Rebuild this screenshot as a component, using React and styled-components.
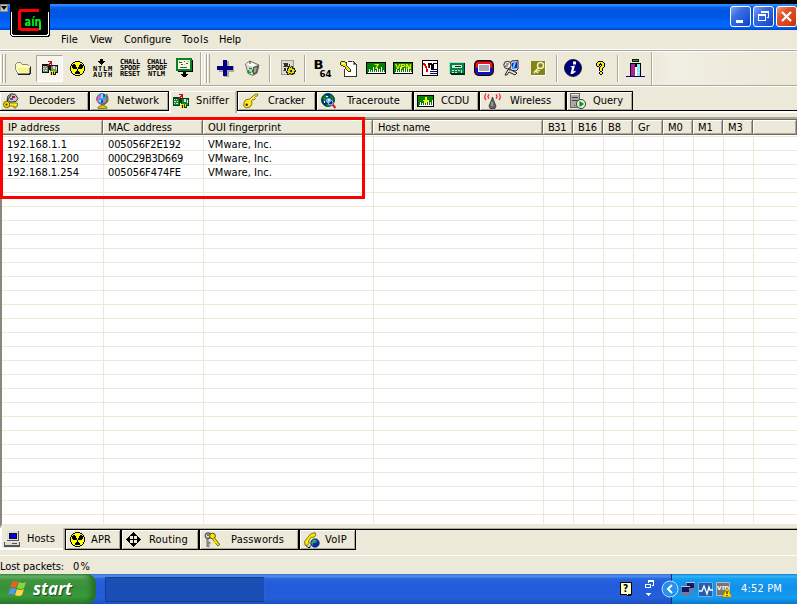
import React, { useLayoutEffect, useRef } from "react";
import styled, { createGlobalStyle } from "styled-components";

const Global = createGlobalStyle`
  *{box-sizing:border-box}
  html,body{margin:0;padding:0;overflow:hidden}
  body{font:11px/14px "DejaVu Sans Condensed","DejaVu Sans",sans-serif;font-stretch:condensed;color:#000}
  svg{display:block;flex:none;overflow:visible}
`;
const face = "#ece9d8";

/* Text set to a given advance width, as the bitmap UI font has fixed advances. */
const FitBox = styled.span`
  display:block;flex:none;white-space:pre;
  width:${p => p.$w}px;margin-left:${p => p.$ml || 0}px;
`;
function Fit({ w, ml, children }) {
  const ref = useRef(null);
  useLayoutEffect(() => {
    const el = ref.current;
    el.style.letterSpacing = "0px";
    const natural = el.getBoundingClientRect().width;
    el.style.letterSpacing = (w - natural) / children.length + "px";
  }, [w, children]);
  return <FitBox $w={w} $ml={ml}><span ref={ref}>{children}</span></FitBox>;
}

const Screen = styled.div`
  position:relative;width:797px;height:604px;overflow:hidden;background:${face};
  display:flex;flex-direction:column;
`;
const TitleBar = styled.header`
  height:30px;flex:none;display:flex;justify-content:flex-end;gap:2px;padding-top:2px;
  border-top:4px solid #000;
  background:linear-gradient(#2a80f5 0,#3590ff 1px,#0a63ee 3px,#0055e0 6px,#0058e8 13px,#0067ff 20px,#0066fb 23px,#0042cc 26px);
`;
const WinButton = styled.button`
  width:21px;height:21px;padding:0;border:1px solid #fff;border-radius:3px;
  display:grid;place-items:center;
  background:${p => p.$close
    ? "linear-gradient(135deg,#f0a080,#e0502c 35%,#d84418 70%,#b83008)"
    : "linear-gradient(135deg,#82a8f4,#3a6ee0 35%,#2258dc 70%,#1540b0)"};
`;
const CornerMark = styled.div`
  position:absolute;left:0;top:4px;width:8px;height:8px;background:#c8c8c8;border:1px solid #888;
  display:grid;place-items:center;
`;
const Logo = styled.div`position:absolute;left:10px;top:0;width:40px;height:37px;`;
const MenuBar = styled.nav`
  height:22px;flex:none;display:flex;padding-top:3px;
  border-bottom:1px solid #fff;box-shadow:inset 0 -1px #aca899,inset 0 -2px #fff;
`;
const Toolbar = styled.div`
  height:35px;flex:none;display:flex;align-items:center;padding-bottom:2px;
  border-bottom:1px solid #fff;box-shadow:inset 0 -1px #aca899;
  background:linear-gradient(90deg,#ece9d8 651px,#f1eee3 670px,#ece9d8);
`;
const Slot = styled.div`
  flex:none;width:${p => p.$w}px;margin-left:${p => p.$ml}px;height:24px;
  display:grid;place-items:center;
`;
const Pressed = styled(Slot)`
  height:27px;background:#f7f5ee;border:1px solid #aca899;border-right-color:#fff;border-bottom-color:#fff;
`;
const Grip = styled.i`
  flex:none;width:6px;height:29px;margin-left:${p => p.$ml}px;
  background:linear-gradient(90deg,#fff 1px,${face} 1px 2px,#aca899 2px 3px,#fff 3px 4px,${face} 4px 5px,#aca899 5px);
`;
const Sep = styled.i`
  flex:none;width:2px;height:${p => p.$h || 27}px;margin-left:${p => p.$ml}px;
  background:linear-gradient(90deg,#aca899 1px,#fff 1px);
`;
const TabStrip = styled.div`
  flex:none;display:flex;height:${p => p.$bottom ? 22 : 24}px;margin-top:${p => p.$bottom ? 0 : 4}px;
  ${p => p.$bottom
    ? "background:linear-gradient(#aca899 1px,#000 1px 2px,transparent 2px);"
    : "background:linear-gradient(transparent 19px,#000 19px 20px,#fff 20px 22px,#ece9d8 22px);"}
`;
const Tab = styled.div`
  flex:none;width:${p => p.$w}px;display:flex;align-items:center;overflow:visible;
  height:${p => p.$active ? 22 : p.$bottom ? 21 : 20}px;
  margin-top:${p => p.$bottom ? (p.$active ? 0 : 1) : 0}px;
  padding-left:${p => p.$pad}px;background:${face};
  ${p => p.$active
    ? `border-right:1px solid #aca899;box-shadow:inset 2px 0 #fff,inset -1px 0 #c8c4b4,inset 0 ${p.$bottom ? "-2px" : "1px"} #fff;${p.$bottom ? "" : "padding-bottom:2px;"}`
    : `border:solid #000;border-width:1px 1px 1px ${p.$first ? 0 : 1}px;box-shadow:inset 1px 1px #fff,inset -1px -1px #aca899;`}
`;
const TabIcon = styled.span`width:${p => p.$w}px;flex:none;height:18px;display:flex;align-items:center;`;

const Table = styled.section`
  height:411px;flex:none;display:flex;flex-direction:column;margin-top:2px;
  border-top:2px solid #aca899;border-left:2px solid #8b887b;background:#fff;
  border-bottom:4px solid ${face};
`;
const Header = styled.div`display:flex;height:16px;flex:none;border-top:1px solid #716f64;`;
const HeadCell = styled.div`
  width:${p => p.$w}px;${p => p.$grow ? "flex:1;" : "flex:none;"}padding-left:5px;line-height:15px;
  background:${face};border-right:1px solid #716f64;border-bottom:1px solid #716f64;
  box-shadow:inset 1px 1px #fff,inset -1px -1px #aca899;
  &:first-child{padding-left:6px}
`;
const Body = styled.div`
  flex:1;padding-top:1px;
  background:
    repeating-linear-gradient(transparent 0 1px,#ece9d8 1px 2px,transparent 2px 14px),
    #fff;
`;
const Row = styled.div`display:flex;height:${p => p.$fill || 14}px;line-height:18px;`;
const Cell = styled.div`
  flex:none;width:${p => p.$w}px;border-right:1px solid ${face};padding-left:4px;
  &:first-child{width:${p => p.$w + 1}px;padding-left:5px}
`;
const Highlight = styled.div`
  position:absolute;left:0;top:117px;width:365px;height:82px;border:3px solid #f00;
`;
const Status = styled.footer`
  height:24px;flex:none;display:flex;align-items:flex-end;padding-bottom:0;
  background:linear-gradient(transparent 5px,#fff 5px 6px,transparent 6px);
`;
const Taskbar = styled.footer`
  height:30px;flex:none;display:flex;align-items:center;color:#fff;
  background:linear-gradient(#3168d5 0,#4e93f0 2px,#2862dc 5px,#235cdb 12px,#245edb 24px,#1e50bd);
`;
const Start = styled.button`
  width:96px;height:30px;flex:none;border:0;padding:0 0 1px 8px;display:flex;align-items:center;gap:5px;color:#fff;
  border-radius:0 9px 9px 0;
  background:linear-gradient(#4c9a4c 0,#72b972 2px,#3f963f 6px,#389038 13px,#3a9a3a 22px,#2c7a2c);
  box-shadow:inset -5px 0 5px #26702a;
  font:italic bold 17px "Open Sans","Noto Sans",sans-serif;text-shadow:1px 1px 1px #1a471a;
`;
const TaskItem = styled.div`
  width:160px;height:25px;margin:1px 0 0 9px;background:#1c4fb5;border:1px solid #153d90;
  border-right-color:#2b62c8;border-radius:2px;
`;
const QuickTray = styled.div`margin-left:355px;width:51px;display:flex;align-items:center;`;
const Tray = styled.div`
  flex:1;height:30px;display:flex;align-items:center;border-left:1px solid #103080;
  background:linear-gradient(#1078d0 0,#32b8f6 2px,#159df0 5px,#1290e8 14px,#129cf0 24px,#0d74c8);
`;
const TrayArrow = styled.span`width:18px;margin-left:-11px;flex:none;`;
const TrayIcon = styled.span`width:${p => p.$w}px;margin-left:${p => p.$ml}px;flex:none;`;

const S = ({ w = 16, h = 16, soft, children }) => (
  <svg width={w} height={h} viewBox={`0 0 ${w} ${h}`} shapeRendering={soft ? "auto" : "crispEdges"}>{children}</svg>
);
const P = ({ c, d }) => <path d={d} fill={c} />;
const L = ({ c, d, w = 1 }) => <path d={d} stroke={c} strokeWidth={w} fill="none" />;

/* Small bitmap: one character per pixel, "." is empty. */
function Bitmap({ rows, colors }) {
  const w = Math.max(...rows.map(r => r.length));
  return <S w={w} h={rows.length}>{Object.entries(colors).map(([k, c]) => {
    let d = "";
    rows.forEach((row, y) => [...row].forEach((ch, x) => { if (ch === k) d += `M${x} ${y}h1v1h-1z`; }));
    return <path key={k} d={d} fill={c} />;
  })}</S>;
}

const folderRows = [
  "..gggg..........",
  ".gwyyyg.........",
  "gwyyyyygggggg...",
  "gyyyyyyyyyyyyg..",
  "gyywwwwwwwwwwwwg",
  "gywyyyyyyyyyyyyk",
  "gwyyoyyoyyoyyogk",
  "gwyoyyoyyoyyoygk",
  ".gwyyoyyoyyoyygk",
  ".gwyoyyoyyoyyogk",
  "..gwyyyyyyyyyygk",
  "..ggggggggggggkk",
  "...kkkkkkkkkkkk.",
];
const Folder = () => <Bitmap rows={folderRows} colors={{ g: "#8c8a78", w: "#ffffff", y: "#fffaa8", o: "#f2e63c", k: "#222222" }} />;
const Nic = ({ green }) => <S>
  <P c={green ? "#004412" : "#111"} d="M0 4h7v9H0zM7 5h9v8h-2v2H8z" />
  <P c={green ? "#16853a" : "#789078"} d="M1 6h5v6H1zM9 6h6v6H9z" />
  <P c="#d8e8d8" d="M1 6h1v1H1zM3 6h1v1H3zM1 8h2v1H1zM4 8h1v1H4zM1 10h1v1H1zM3 10h2v1H3zM11 6h2v3h-2zM14 7h1v3h-1z" />
  <P c="#eee000" d="M8 11h3v4H8zM12 11h1v3h-1z" /><P c="#111" d="M9 12h1v3H9z" />
  <P c="#c01020" d="M5 5h1V4h1V3h1V2H6V1h4v4H9V4H8v1H7v1H6v1H5z" /></S>;
const radiationRows = [
  ".....#####.....",
  "...##yyyyy##...",
  "..#yyyyyyyyy#..",
  ".#y##yyyyy##y#.",
  ".#####yyy#####.",
  "#y####yyy####y#",
  "#y#####y#####y#",
  "#yy####k####yy#",
  "#yyyyyy#yyyyyy#",
  "#yyyyyy#yyyyyy#",
  ".#yyyy###yyyy#.",
  ".#yyy#####yyy#.",
  "..#yy#####yy#..",
  "...##yyyyy##...",
  ".....#####.....",
];
const Radiation = () => <Bitmap rows={radiationRows} colors={{ y: "#ffff00", "#": "#000000" }} />;

const MiniText = styled.div`
  width:20px;height:${p => p.$rows * 6}px;display:flex;flex-direction:column;
  font:bold 7px/6px "DejaVu Sans Mono","Liberation Mono",monospace;
`;
const Mini = ({ lines, arrow }) => <div>
  {arrow && <svg width="20" height="7" viewBox="0 0 20 7" shapeRendering="crispEdges"><P c="#000" d="M7 0h3v2h2v1h-1v1h-1v1H9v1H8V5H7V4H6V3H5V2h2z" /></svg>}
  <MiniText $rows={lines.length}>{lines.map(l => <Fit key={l} w={lines.length === 3 && l.length === 4 ? 17 : 20} ml={lines.length === 3 && l.length === 4 ? 1 : 0}>{l}</Fit>)}</MiniText></div>;

const Cert = () => <S w={17} h={20}><rect x="1" y="1" width="14" height="11" fill="#fffbd0" stroke="#08802a" strokeWidth="2" />
  <L c="#1858a0" d="M4 9.500h7M3 4.500h3m2-1h1m1 2h2M5 6.500h2" /><P c="#d0c040" d="M3 3h1v1H3zM11 3h2v1h-2zM8 6h1v1H8z" />
  <P c="#000" d="M7 14h3v2h2v1h-1v1h-1v1H7v-1H6v-1H5v-1h2zM16 2h1v12H2v-1h14z" /></S>;
const Plus = () => <S w={17} h={17}><P c="#aaa69a" d="M7 1h5v5h5v6h-5v5H7v-5H2V7h5z" /><P c="#000080" d="M6 0h4v6h6v4h-6v6H6v-6H0V6h6z" /></S>;
const Recycle = () => <S w={17} h={17} soft><path d="M1.500 4 6 1l9 4-2 8-4 2.500-5-2z" fill="#dddbd0" stroke="#77756c" />
  <P c="#fff" d="M2 4 6 2l6 3-3 2z" /><P c="#55534c" d="m9 7 6-2-2 8-4 2z" /><P c="#a5a398" d="m10 8 3-1-1 5-2 1z" />
  <L c="#0a9a35" d="M5 8.500h3M8.500 9.500v3M4.500 10v2.500H7" w="1.600" /><L c="#333" d="M6 1v3" /></S>;
const DocGear = () => <S><rect x="1.500" y=".5" width="12" height="14" fill="#dedbcc" stroke="#999" />
  <P c="#777" d="M3 3h2v1H3zM3 6h2v1H3zM3 10h2v1H3z" /><P c="#333" d="M4 3h4v4H4zM9 4h1v3H9zM4 8h2v3H4z" />
  <P c="#222" d="M7 8h1V6h2v1h1V6h2v2h2v2h1v2h-1v2h-2v1h-2v-1H9v1H7v-2H6v-2h1z" />
  <P c="#e8d800" d="M8 9h1V7h1v1h1V7h1v2h2v1h1v1h-1v2h-2v1h-1v-1H9v1H8v-2H7v-1h1z" /><P c="#222" d="M10 10h2v2h-2z" /></S>;
const B64 = () => <S w={17} h={17}><text x="-.5" y="9" fontSize="11.500" fontWeight="bold" fontFamily="DejaVu Sans" textLength="10" lengthAdjust="spacingAndGlyphs">B</text>
  <text x="5.500" y="16.500" fontSize="9" fontWeight="bold" fontFamily="DejaVu Sans" textLength="12" lengthAdjust="spacingAndGlyphs">64</text></S>;
const KeyDoc = () => <S w={17} h={17}><P c="#fff" d="M4 1h10l2 3v12H4z" /><L c="#333" d="M8 1.500h5l3 3V16H4.500V9" /><P c="#888" d="M12 1h1v4h3V4h-2V2h-2z" />
  <P c="#333" d="M1 1h4v1h2v4h1v1h1v1h1v1h1v3H8v-1H7v-1H6V9H5V7H3V6H1V5H0V2h1z" />
  <P c="#ffec00" d="M1 2h4v1h1v3h1v1h1v1h1v1h1v2H8v-1H7V9H6V7H5V6H3V5H1z" /><P c="#fff" d="M2 3h2v1H2z" /></S>;
const Spectrum = ({ text, arrow, w = 20 }) => <S w={w} h={12}><rect x=".5" y=".5" width={w - 1} height="11" fill="#008000" stroke="#000" />
  <P c="#fff" d={`M2 10h1V7h1v3h1V8h1v2h1V5h1v5h1V8h1v2h1V6h1v4h1V7h1v3h1V5h1v${w > 18 ? "5h1V8h1v2h1" : "5"}v1H2z`} />
  {arrow && <P c="#ffff00" d="M8 2h2v3h2v1h-1v1h-1v1H8V7H7V6H6V5h2z" />}
  {text && <text x={text.length > 1 ? 2 : 8} y="7" fill="#ff0" fontSize="7.500" fontWeight="bold" fontFamily="Liberation Sans" textLength={text.length > 1 ? 16 : 5} lengthAdjust="spacingAndGlyphs">{text}</text>}</S>;
const Vnc = () => <S><rect x=".5" y=".5" width="15" height="15" fill="#fff" stroke="#000" />
  <P c="#000" d="M6 3h4v1h1v6H9V5H8v3H6zM11 3h4v1h-3v5h3v1h-5V5h1z" /><P c="#e00" d="M1 3h2v1h1v2h1v3h1V5h1v3H6v4H4V8H3V6H2V5H1z" /><P c="#000080" d="M8 11h7v1H8zM8 13h7v1H8z" /></S>;
const Calc = () => <S w={16} h={13}><rect x=".5" y=".5" width="15" height="11" fill="#087f45" stroke="#002a20" />
  <L c="#9fe8d0" d="M0 .5h16" /><L c="#9fe8d0" d="M.5 1v11" /><P c="#002a20" d="M2 12h14v1H2z" />
  <P c="#cde8d8" d="M3 3h10v3H3zM3 8h2v1H3zM6 8h2v1H6zM9 8h2v1H9zM3 10h2v1H3zM6 10h2v1H6zM12 8h1v3h-1z" /><P c="#222" d="M6 4h6v1H6z" /></S>;
const Ring = () => <S w={20} h={16} soft><rect x=".7" y=".7" width="18.500" height="14.500" rx="4" fill="#f01020" stroke="#000" strokeWidth="1.400" />
  <P c="#0010e0" d="M1.500 8H5v4h10V8h3.500v4l-2.500 2.500H4L1.500 12z" /><rect x="4.500" y="4.500" width="11" height="7" fill="#aaa" stroke="#fff" /></S>;
const PcMagnet = () => <S soft><path d="M7 3.500 8.500 1l6.500-.5V9l-2 2-6-1z" fill="#ddd" stroke="#222" /><P c="#0029db" d="m9 3 5-1v6l-5 1z" /><P c="#5bd6ff" d="m11 2.500 2-.3L11 8.500l-2 .3z" />
  <circle cx="4.500" cy="5" r="3.700" fill="#f4f2ee" stroke="#222" /><path d="M5 9.500 8 10l6 3-2 2-6-3-2 3H2z" fill="#e8e6de" stroke="#222" /><L c="#444" d="M3 4h3M2 6h3" /></S>;
const OliveKey = () => <S w={15} h={16}><P c="#fff" d="M0 1h15v15H0z" /><P c="#858511" d="M0 1h14v14H0z" /><g shapeRendering="auto"><circle cx="9.500" cy="5.500" r="3" fill="none" stroke="#f2f0d0" strokeWidth="1.500" /><L c="#f2f0d0" w="1.600" d="M8 7.500 3.500 12v1.500M5 11l2 2M6.500 9.500l2 1.500" /></g></S>;
const Info = () => <S w={18} h={18} soft><circle cx="9" cy="9" r="8.500" fill="#00007a" stroke="#00002a" strokeWidth=".8" /><P c="#fff" d="M9 2.500h3V5.500H9zM6 7.500 11 6.500 9.300 12.500 11.500 11.500V13L8.500 15H6.500L8 8.500z" /></S>;
const questionRows = [
  "..kkkkk..",
  ".kyyyyyk.",
  "kyyykyyyk",
  "kyykkkyyk",
  "kyyk.kyyk",
  ".kk.kyyyk",
  "...kyyyk.",
  "...kyyk..",
  "...kyyk..",
  "...kyyk..",
  "....kk...",
  "...kyyk..",
  "...kyyk..",
  "....kk...",
];
const Question = () => <Bitmap rows={questionRows} colors={{ k: "#000000", y: "#ffe81a" }} />;
const Exit = () => <S w={19} h={19}><P c="#000080" d="M0 17h19v1H0z" /><P c="#000" d="M4 4h11v13h-1V5H5v12H4zM9 4h2v14H9z" /><P c="#b0209a" d="M5 5h4v12H5z" /><P c="#fff" d="M9 8h2v9H9z" /><P c="#80e8f0" d="M11 5h3v12h-3z" /><P c="#111" d="M6 0h7v3H6z" /><P c="#00b840" d="M7 1h5v1H7z" /><P c="#fff" d="M12 7h1v1h-1zM13 10h1v1h-1zM12 13h1v1h-1z" /></S>;

const Decoder = () => <S soft><path d="M5 3 8 .8l4 .5 3 4.200-2 3L7 9 4 7z" fill="#c9c7c4" stroke="#333" /><P c="#b01830" d="M9 3h3v2H9z" /><P c="#4060c0" d="M7 5h3v2H7z" />
  <L c="#222" d="m4 8 4-6" /><circle cx="3.700" cy="11.500" r="3.200" fill="#f0df00" stroke="#6b6300" /><path d="M6.500 10h8v3h-1.500v2H11v-2H6.500z" fill="#ffed20" stroke="#6b6300" strokeWidth=".8" /><circle cx="3.500" cy="11.500" r="1" fill="#333" /></S>;
const Globe = () => <S soft><circle cx="7" cy="6" r="5.300" fill="#18b2df" stroke="#803898" /><P c="#df65be" d="M3 3h3v3H4v3H2zM8 6h3v3H8z" /><P c="#2050c8" d="M6 7h2v3H6zM8 1h2v3H8z" /><P c="#60f0ed" d="M6 1h2v4H6zM4 7h2v2H4z" />
  <L c="#777000" w="1.300" d="M11.500 1q4 7-3 11" /><path d="M6 12h3v1l3 1v1.500H3V14l3-1z" fill="#dccb00" stroke="#555000" strokeWidth=".6" /></S>;
const Key = () => <S soft><path d="M1 10 2.500 7l4-1L13 .8l2 .5-1 2-1.500-.3-1 1.500 1 1-1.500 1.500-1.500-.5L8.500 8l.5 3-2 3-4 1-2.300-2z" fill="#ffeb19" stroke="#7d6a00" strokeWidth=".9" /><circle cx="3.700" cy="11.800" r="1.200" fill="#222" /><L c="#fff9a0" d="m7 7.500 5-4.500" /></S>;
const Earth = () => <S soft><circle cx="7" cy="7" r="6.500" fill="#001fa0" stroke="#035018" /><P c="#10822e" d="M1.500 5 4 2l4 1-1 2-2 1v3l-2 1zM9 1l4 4-1 3-2-3-1 1zM5 11h4v2H6z" /><circle cx="7.500" cy="7.500" r="2.500" fill="#62bdec" /><P c="#fff" d="M5 3h2v1H5zM7 6h2v2H7zM3 8h1v2H3z" /><L c="#d01828" w="2" d="m11.500 11.500 3 3.500" /><circle cx="9.500" cy="9.500" r="2.500" fill="none" stroke="#ccc" /></S>;
const Antenna = () => <S w={17} h={16} soft><path d="m8.500 4-1 3-2.500 6 1 2.500h5l1-2.500-2.500-6z" fill="#666" stroke="#222" strokeWidth=".7" /><P c="#ccc" d="M7.500 9h1v4h-1z" /><L c="#f02030" w="1.200" d="M2 .5Q-.5 4 2 7M5 1.500Q3 3.500 5 5.500M15 .5q2.500 3.500 0 6.500M12 1.500q2 2 0 4" /></S>;
const Server = () => <S><rect x=".5" y=".5" width="9" height="14" fill="#aaa" stroke="#666" /><P c="#eee" d="M1 1h8v1H1z" /><P c="#444" d="M2 4h6v1H2zM2 7h6v1H2z" /><P c="#d00" d="M4 12h1v1H4z" /><g shapeRendering="auto"><circle cx="11" cy="11" r="4.600" fill="#d6f0cc" stroke="#444" /><P c="#078c22" d="M9.500 8v6l4.500-3z" /></g></S>;
const Host = () => <S><P c="#555" d="M3 0h12v10H3zM0 11h16v5H0z" /><P c="#ddd" d="M3 0h11v9H3zM1 11h14v3H1z" /><P c="#111" d="M5 2h8v6H5z" /><P c="#0000e0" d="M6 3h6v4H6z" /><P c="#555" d="M8 12h5v1H8z" /></S>;
const Move = () => <S w={15} h={15}><P c="#000" d="M7 0h1v1h1v1h1v1h1v1H8v3h3V4h1v1h1v1h1v1h1v1h-1v1h-1v1h-1v1h-1V8H8v3h3v1h-1v1H9v1H8v1H7v-1H6v-1H5v-1H4v-1h3V8H4v3H3v-1H2V9H1V8H0V7h1V6h1V5h1V4h1v3h3V4H4V3h1V2h1V1h1z" /></S>;
const Keys = () => <S soft><L c="#888" w="2.300" d="M3.500 6v9M3.500 11h3M3.500 14h2" /><circle cx="4" cy="3.700" r="2.800" fill="#ddd" stroke="#555" strokeWidth="1.300" /><circle cx="8.500" cy="4" r="2.800" fill="#ffe800" stroke="#555000" /><L c="#665f00" w="3" d="m9.500 6.500 5.500 7" /><L c="#ffea00" w="1.600" d="m9.500 6.500 5 6.500M11 10l-1.500 1.500" /><circle cx="4" cy="3" r="1" fill="#555" /></S>;
const Phone = () => <S soft><path d="M1 13 .5 9.500 6.500 2l4.500-1.500.8 3L9 5.500 7.500 5 4.500 9l.8 2-2 2.500z" fill="#ffe900" stroke="#625c00" strokeWidth=".8" /><circle cx="11" cy="11" r="4.300" fill="#0b2caa" stroke="#071858" strokeWidth=".6" /><P c="#2aa85c" d="M9 7.500h3l1 2-2 1.500H9v3l-2-3z" /><L c="#111" d="m2 13.500 2 2h2v-2" /></S>;

const tools = [
  [8, 17, <Folder />], [5, 27, <Nic />, "pressed"], [6, 16, <Radiation />],
  [8, 20, <Mini arrow lines={["NTLM", "AUTH"]} />], [7, 20, <Mini lines={["CHALL", "SPOOF", "RESET"]} />],
  [7, 20, <Mini lines={["CHALL", "SPOOF", "NTLM"]} />], [9, 17, <Cert />], [7, 2, null, "end"], [2, 6, null, "grip"],
  [7, 17, <Plus />], [10, 17, <Recycle />], [8, 2, null, "sep"], [9, 16, <DocGear />], [8, 2, null, "sep"],
  [8, 17, <B64 />], [9, 17, <KeyDoc />], [9, 20, <Spectrum text="7" />], [7, 20, <Spectrum text="VPN" />],
  [9, 16, <Vnc />], [11, 16, <Calc />], [9, 20, <Ring />], [9, 16, <PcMagnet />], [12, 15, <OliveKey />],
  [10, 2, null, "sep"], [6, 18, <Info />], [13, 10, <Question />], [12, 2, null, "sep"], [7, 19, <Exit />], [6, 2, null, "end"],
];
/* width, left padding, icon, icon slot width, label, label width */
const topTabs = [
  [89, 3, <Decoder />, 26, "Decoders", 46], [80, 5, <Globe />, 22, "Network", 42],
  [68, 4, <Nic green />, 23, "Sniffer", 33], [79, 5, <Key />, 25, "Cracker", 37],
  [97, 4, <Earth />, 26, "Traceroute", 53], [66, 3, <Spectrum arrow w={17} />, 24, "CCDU", 28],
  [87, 4, <Antenna />, 26, "Wireless", 41], [67, 3, <Server />, 23, "Query", 30],
];
const bottomTabs = [
  [65, 4, <Host />, 23, "Hosts", 28], [56, 4, <Radiation />, 21, "APR", 20], [78, 4, <Move />, 23, "Routing", 39],
  [100, 4, <Keys />, 27, "Passwords", 53], [57, 4, <Phone />, 21, "VoIP", 22],
];
const columns = [
  [101, "IP address", 52], [100, "MAC address", 64], [170, "OUI fingerprint", 73], [170, "Host name", 52],
  [30, "B31", 18], [30, "B16", 19], [30, "B8", 13], [30, "Gr", 12], [30, "M0", 15], [30, "M1", 15], [30, "M3", 15],
];
const hosts = [
  [["192.168.1.1", 60], ["005056F2E192", 73], ["VMware, Inc.", 64]],
  [["192.168.1.200", 72], ["000C29B3D669", 75], ["VMware, Inc.", 64]],
  [["192.168.1.254", 72], ["005056F474FE", 73], ["VMware, Inc.", 64]],
];

function Tool({ item: [ml, w, icon, kind] }) {
  if (kind === "grip") return <Grip $ml={ml} />;
  if (kind === "sep" || kind === "end") return <Sep $ml={ml} $h={kind === "end" ? 33 : 27} />;
  const Box = kind === "pressed" ? Pressed : Slot;
  return <Box $ml={ml} $w={w}>{icon}</Box>;
}
function Tabs({ items, active, bottom }) {
  return <TabStrip $bottom={bottom}>{items.map(([w, pad, icon, slot, label, lw], i) =>
    <Tab key={label} $w={w} $pad={pad} $active={i === active} $first={i === 0} $bottom={bottom}>
      <TabIcon $w={slot}>{icon}</TabIcon><Fit w={lw}>{label}</Fit>
    </Tab>)}</TabStrip>;
}

export default function App() {
  return <Screen><Global />
    <TitleBar>
      <WinButton><S w={15} h={15}><P c="#fff" d="M3 11h7v3H3z" /></S></WinButton>
      <WinButton><S w={15} h={15}><path d="M5.500 4V2.500h7v6H11M2.500 6.500h7v5h-7z" fill="none" stroke="#fff" /><P c="#fff" d="M5 2h8v2H5zM2 5h8v2H2z" /></S></WinButton>
      <WinButton $close><svg width="15" height="15"><path d="m3 3 9 9m0-9-9 9" stroke="#fff" strokeWidth="2.300" /></svg></WinButton>
    </TitleBar>
    <CornerMark><svg width="6" height="6"><path d="M0 1h6L3 5z" /></svg></CornerMark>
    <Logo><svg width="40" height="37" shapeRendering="crispEdges">
      <path d="M0 0h40v35l-2 2H2l-2-2z" /><path d="M1.500 12v22l1 1h35l1-1V12" fill="none" stroke="#fff" />
      <path d="M9 9h20v3H11v16h18v3H10v-1H8V11h1z" fill="#f00" />
      <text x="14.500" y="26" fill="#00f020" fontFamily="DejaVu Sans" fontSize="12" fontWeight="bold" textLength="17" lengthAdjust="spacingAndGlyphs">aín</text>
      <path d="M29 22h2v8h-2z" fill="#00f020" />
    </svg></Logo>
    <MenuBar>
      <Fit ml={61} w={17}>File</Fit><Fit ml={12} w={22}>View</Fit><Fit ml={12} w={47}>Configure</Fit>
      <Fit ml={11} w={27}>Tools</Fit><Fit ml={10} w={22}>Help</Fit>
    </MenuBar>
    <Toolbar><Grip $ml={0} />{tools.map((t, i) => <Tool key={i} item={t} />)}</Toolbar>
    <Tabs items={topTabs} active={2} />
    <Table>
      <Header>{columns.map(([w, label, lw]) => <HeadCell key={label} $w={w}><Fit w={lw}>{label}</Fit></HeadCell>)}<HeadCell $grow /></Header>
      <Body>
        {hosts.map((cells, i) => <Row key={i}>{columns.map(([w], c) =>
          <Cell key={c} $w={w}>{cells[c] && <Fit ml={0} w={cells[c][1]}>{cells[c][0]}</Fit>}</Cell>)}</Row>)}
        <Row $fill={345}>{columns.map(([w], c) => <Cell key={c} $w={w} />)}</Row>
      </Body>
    </Table>
    <Tabs items={bottomTabs} active={0} bottom />
    <Status><Fit w={64}>Lost packets:</Fit><Fit ml={9} w={18}>0%</Fit></Status>
    <Taskbar>
      <Start><svg width="20" height="20">
        <path d="M4 3q3-2 6 0L8 9Q5 7 2 9z" fill="#e8602a" /><path d="M11 3q3 2 7 0l-2 6q-3 2-7 0z" fill="#92cf45" />
        <path d="M2 10q3-2 6 0l-2 6q-3-2-6 0z" fill="#5b91ef" /><path d="M9 10q3 2 7 0l-2 6q-3 2-7 0z" fill="#ffd83b" />
      </svg><Fit w={39}>start</Fit></Start>
      <TaskItem />
      <QuickTray>
        <S w={13} h={14}><path d="M.5 .5h11v12h-3l2 1.500-5-1.500h-5z" fill="#ffffc8" stroke="#000" /><text x="3" y="10" fontSize="10" fontWeight="bold" fontFamily="DejaVu Sans" fill="#000">?</text></S>
        <TrayIcon $ml={11} $w={12}><S w={12} h={20}><path d="M4.500 4V2.500h5v4H8M1.500 5.500h5v3h-5z" fill="none" stroke="#fff" /><P c="#fff" d="M4 1h6v2H4zM1 5h6v1H1zM2 14h5v1H6v1H5v1H4v-1H3v-1H2z" /></S></TrayIcon>
      </QuickTray>
      <Tray>
        <TrayArrow><svg width="18" height="18"><circle cx="9" cy="9" r="8" fill="#2592ef" stroke="#b8e2ff" /><path d="M11 5 7 9l4 4" fill="none" stroke="#fff" strokeWidth="2" /></svg></TrayArrow>
        <TrayIcon $ml={1} $w={15}><S><P c="#7278a0" d="M6 1h9v8H6zM1 5h9v8H1zM3 13h6v2H3zM9 10h5v2H9z" /><P c="#101b62" d="M7 2h7v5H7zM2 6h7v5H2z" /><P c="#b9c5e0" d="M6 1h9v1H6zM1 5h9v1H1z" /></S></TrayIcon>
        <TrayIcon $ml={3} $w={15}><svg width="15" height="15"><path fill="#215fae" stroke="#77aadc" d="M.5 .5h14v14H.5z" /><path d="M1 9h3l2-5 3 8 2-7 1 3h3" fill="none" stroke="#fff" strokeWidth="1.300" /></svg></TrayIcon>
        <TrayIcon $ml={3} $w={16}><svg width="17" height="17"><path fill="#777" stroke="#bbb" d="M.5 1.500h13v13H.5z" /><text x="1" y="9" fill="#fff" fontSize="8" fontWeight="bold" fontFamily="Liberation Sans" textLength="12">vm</text><path d="m11 7 5 9H6z" fill="#ffe000" stroke="#a07800" strokeWidth=".7" /><path d="M11 10v3m0 1v1" stroke="#000" /></svg></TrayIcon>
        <Fit ml={9} w={41}>4:52 PM</Fit>
      </Tray>
    </Taskbar>
    <Highlight />
  </Screen>;
}
